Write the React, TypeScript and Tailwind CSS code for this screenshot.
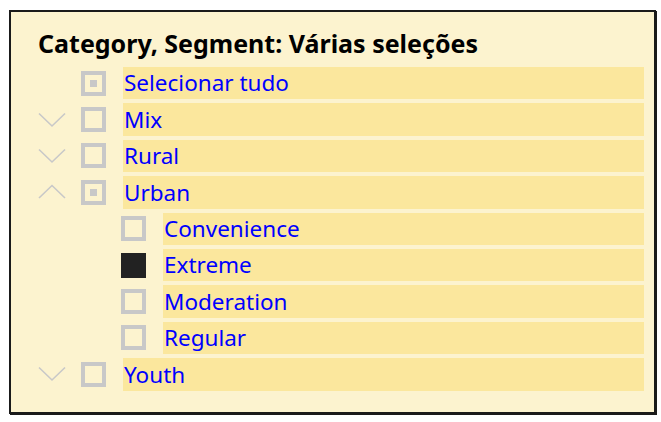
import React from "react";

type Row = {
  label: string;
  level: number;
  chevron?: "down" | "up" | null;
  state: "empty" | "partial" | "checked";
};

const rows: Row[] = [
  { label: "Selecionar tudo", level: 0, chevron: null, state: "partial" },
  { label: "Mix", level: 0, chevron: "down", state: "empty" },
  { label: "Rural", level: 0, chevron: "down", state: "empty" },
  { label: "Urban", level: 0, chevron: "up", state: "partial" },
  { label: "Convenience", level: 1, state: "empty" },
  { label: "Extreme", level: 1, state: "checked" },
  { label: "Moderation", level: 1, state: "empty" },
  { label: "Regular", level: 1, state: "empty" },
  { label: "Youth", level: 0, chevron: "down", state: "empty" },
];

function Chevron({ dir }: { dir: "down" | "up" }) {
  return (
    <svg width="28" height="16" viewBox="0 0 28 16" className="block">
      {dir === "down" ? (
        <polyline points="1,1.5 14,14 27,1.5" fill="none" stroke="#c8c8c8" strokeWidth="1.6" />
      ) : (
        <polyline points="1,14 14,1.5 27,14" fill="none" stroke="#c8c8c8" strokeWidth="1.6" />
      )}
    </svg>
  );
}

function Box({ state }: { state: Row["state"] }) {
  if (state === "checked") {
    return <div className="w-[25px] h-[25px] bg-[#222222] shrink-0" />;
  }
  return (
    <div className="w-[25px] h-[25px] border-[4px] border-[#c8c8c8] shrink-0 flex items-center justify-center">
      {state === "partial" && <div className="w-[7px] h-[7px] bg-[#c8c8c8]" />}
    </div>
  );
}

export default function App() {
  return (
    <div className="w-[661px] h-[422px] bg-white pt-[10px] pl-[9px]">
      <div
        className="w-[647px] h-[404px] bg-[#fcf3cf] border-2 border-[#1a1a1a] shadow-[1px_1px_0_#1a1a1a] pl-[27px] pr-[10px] pt-[16px]"
        style={{ fontFamily: '"Segoe UI", "Noto Sans", sans-serif' }}
      >
        <div className="text-[25px] font-bold text-black leading-[30px] h-[39px] whitespace-nowrap">
          Category, Segment: Várias seleções
        </div>
        <div className="flex flex-col gap-[4px]">
          {rows.map((r) => (
            <div key={r.label} className="flex items-center h-[32.4px]">
              <div className="w-[28px] shrink-0 flex items-center">
                {r.chevron && <Chevron dir={r.chevron} />}
              </div>
              <div className={r.level === 1 ? "w-[40px] shrink-0" : "w-0"} />
              <div className="ml-[15px] mr-[17px] flex items-center">
                <Box state={r.state} />
              </div>
              <div className="flex-1 h-full bg-[#fbe79d] flex items-center pl-[1px] pt-[1px] text-[22.5px] text-[#0000ff] leading-none whitespace-nowrap">
                {r.label}
              </div>
            </div>
          ))}
        </div>
      </div>
    </div>
  );
}
